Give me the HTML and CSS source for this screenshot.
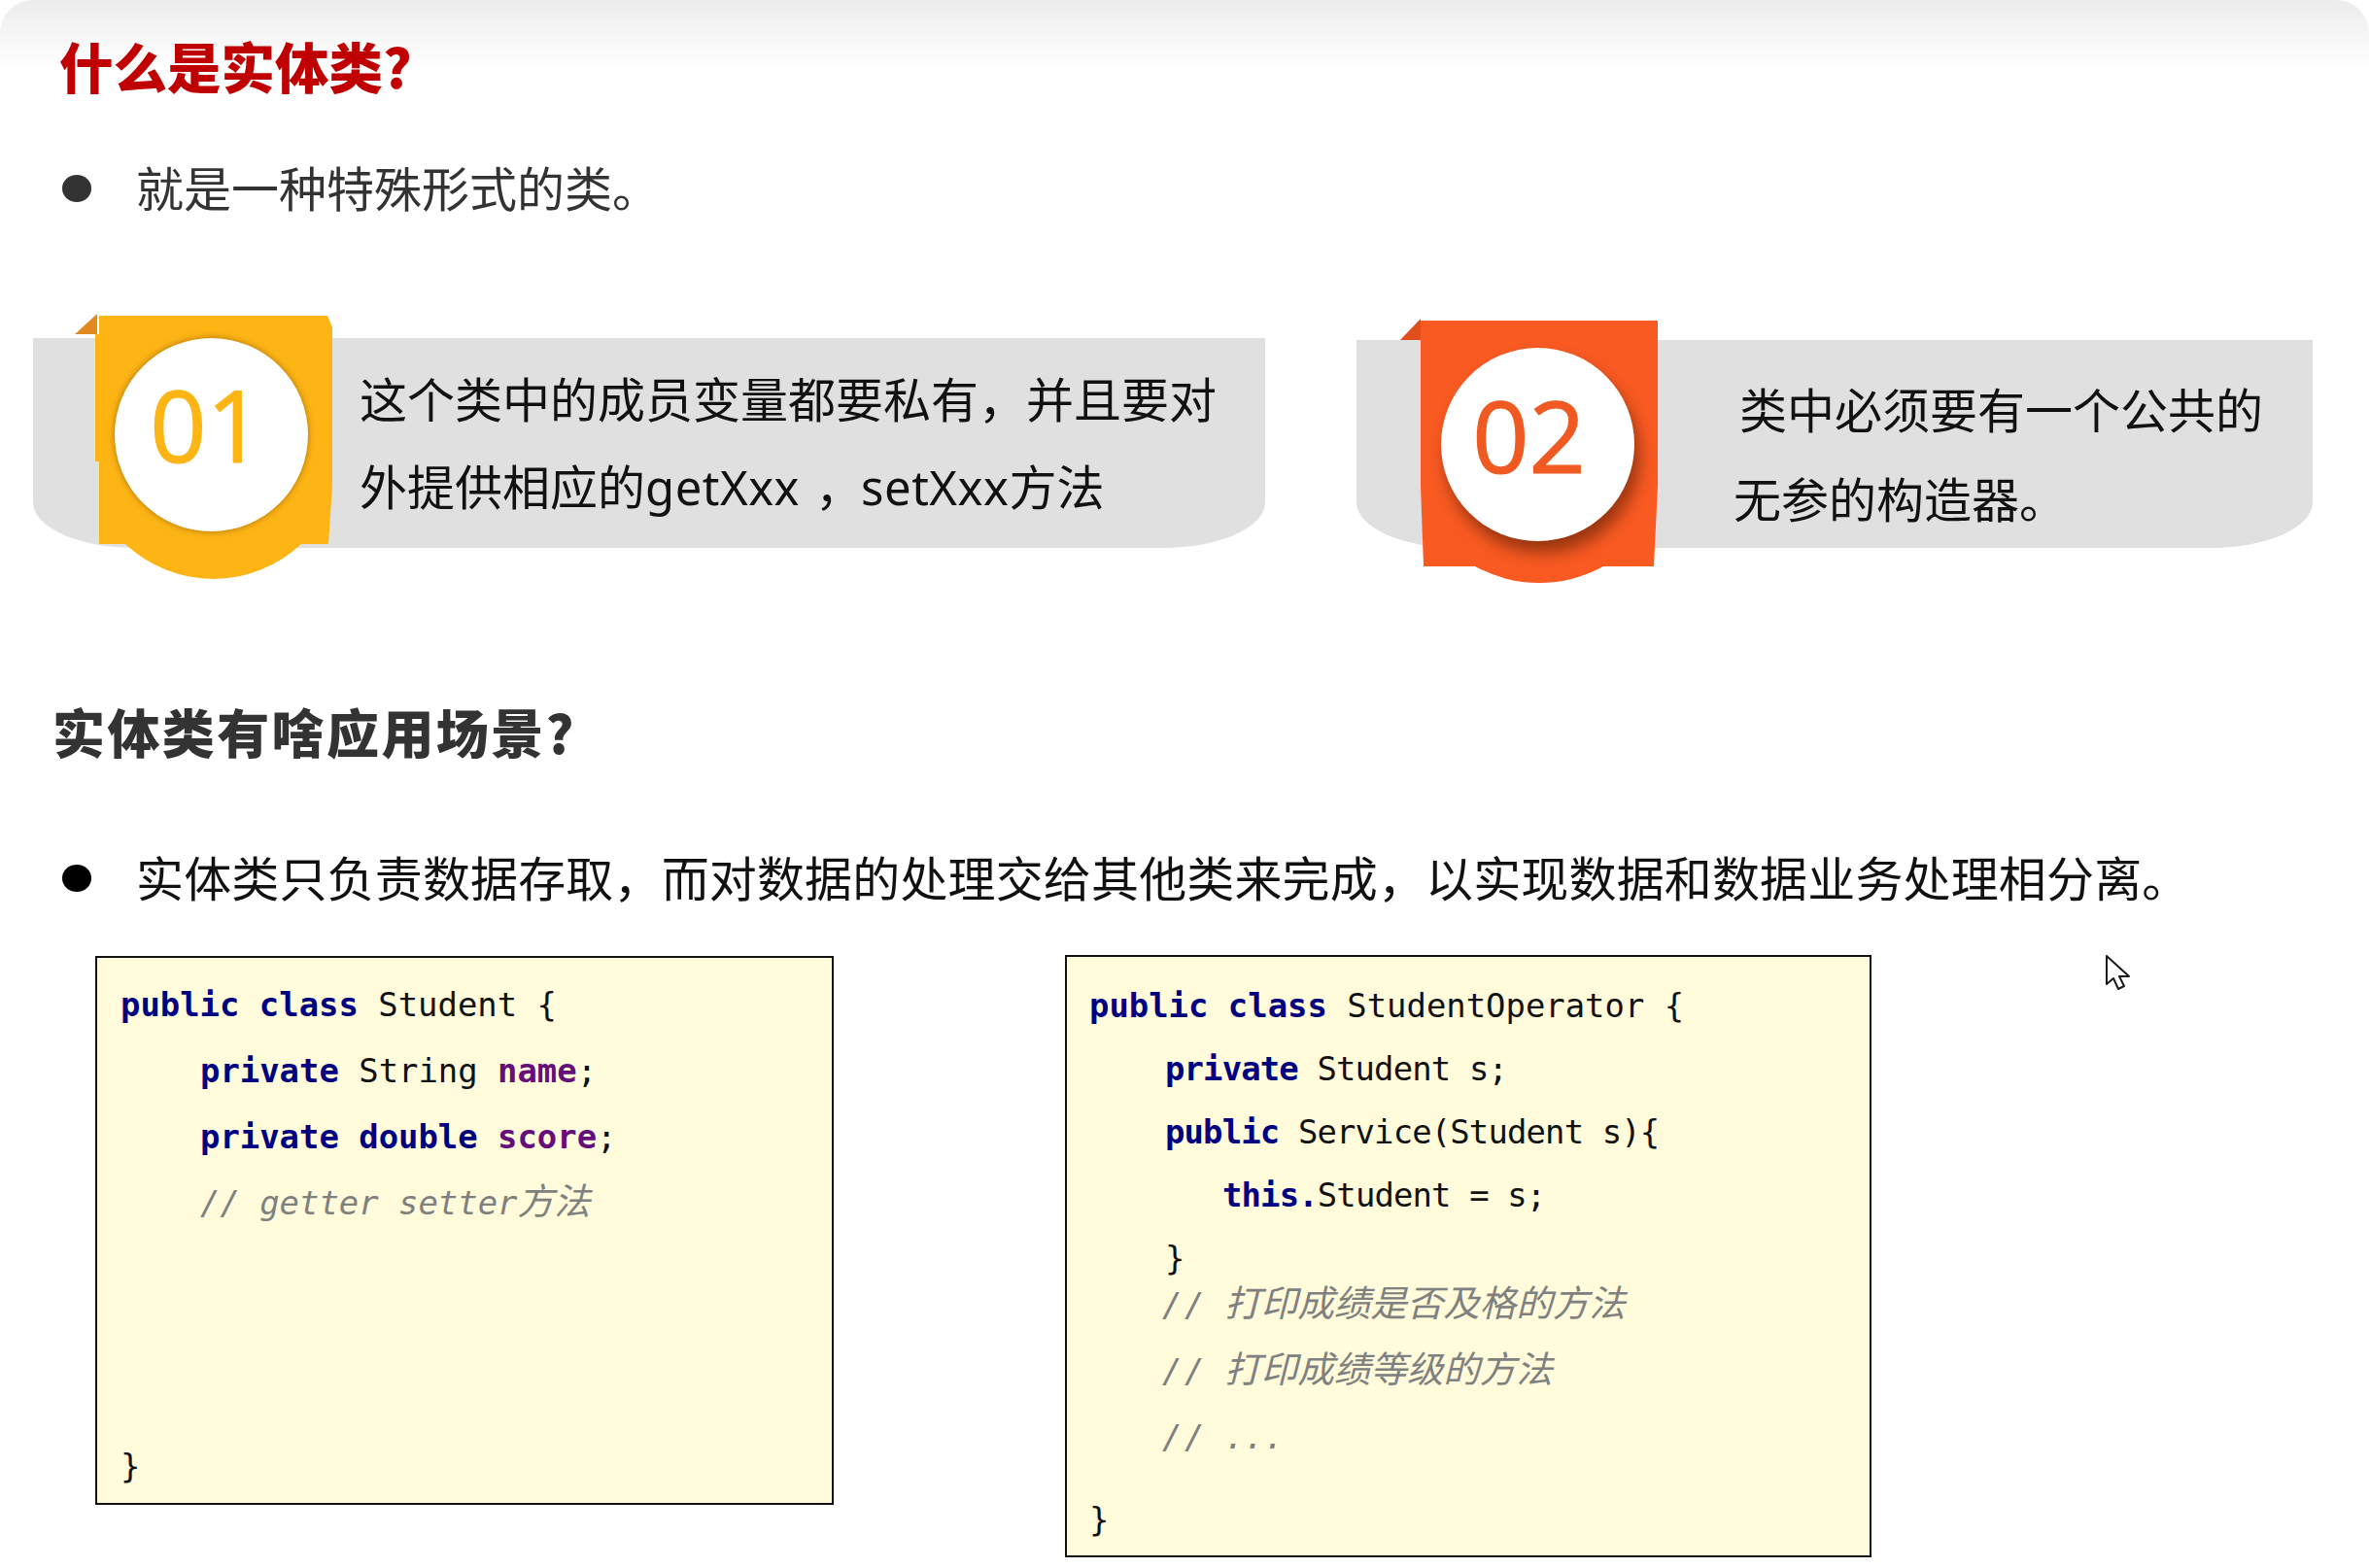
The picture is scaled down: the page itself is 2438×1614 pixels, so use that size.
FILE: index.html
```html
<!DOCTYPE html>
<html lang="zh-CN">
<head>
<meta charset="utf-8">
<title>实体类</title>
<link rel="stylesheet" href="styles.css">
</head>
<body>
<main class="slide">
  <h1 class="title">什么是实体类?</h1>
  <div class="bullet bullet-first"><span class="dot dot-soft"></span><span class="bullet-text">就是一种特殊形式的类。</span></div>

  <section class="banners">
    <div class="banner banner-one">
      <div class="badge badge-one">
        <svg class="badge-shape" viewBox="70 320 280 280" width="280" height="280" aria-hidden="true">
          <path fill="#e08a20" d="M77 344 L100 323 V344 Z"/>
          <path fill="#fdb515" d="M102 325 H337 L342 337 V500 L338 560 H310 A132 132 0 0 1 129 560 H102 V475 H98 V344 H102 Z"/>
        </svg>
        <div class="disc disc-one">01</div>
      </div>
      <div class="banner-line">这个类中的成员变量都要私有，并且要对</div>
      <div class="banner-line">外提供相应的<span class="lat">getXxx</span> <span class="comma">，</span> <span class="lat">setXxx</span>方法</div>
    </div>
    <div class="banner banner-two">
      <div class="badge badge-two">
        <svg class="badge-shape" viewBox="1435 325 280 280" width="280" height="280" aria-hidden="true">
          <path fill="#e04e1c" d="M1441 350 L1462 328 V350 Z"/>
          <path fill="#f95a22" d="M1462 330 H1706 V500 L1702 583 H1650 A137 137 0 0 1 1518 583 H1465 L1462 500 Z"/>
        </svg>
        <div class="disc disc-two">02</div>
      </div>
      <div class="banner-line">类中必须要有一个公共的</div>
      <div class="banner-line banner-line-out">无参的构造器。</div>
    </div>
  </section>

  <h2 class="subtitle">实体类有啥应用场景?</h2>
  <div class="bullet bullet-second"><span class="dot"></span><span class="bullet-text bullet-text-long">实体类只负责数据存取，而对数据的处理交给其他类来完成，以实现数据和数据业务处理相分离。</span></div>

  <section class="codes">
    <div class="code code-one">
      <div class="ln"><b class="kw">public class</b> Student {</div>
      <div class="ln i1"><b class="kw">private</b> String <b class="fld">name</b>;</div>
      <div class="ln i1"><b class="kw">private double</b> <b class="fld">score</b>;</div>
      <div class="ln i1 cm">// getter setter<span class="zh">方法</span></div>
      <div class="ln end">}</div>
    </div>
    <div class="code code-two">
      <div class="ln"><b class="kw">public class</b> StudentOperator {</div>
      <div class="ln i1 tight"><b class="kw">private</b> Student s;</div>
      <div class="ln i1 tight"><b class="kw">public</b> Service(Student s){</div>
      <div class="ln i2 tight"><b class="kw">this.</b>Student = s;</div>
      <div class="ln i1 close">}</div>
      <div class="ln i1 cm wide"><span class="sl">//</span> <span class="zh">打印成绩是否及格的方法</span></div>
      <div class="ln i1 cm wide"><span class="sl">//</span> <span class="zh">打印成绩等级的方法</span></div>
      <div class="ln i1 cm wide"><span class="sl">//</span> ...</div>
      <div class="ln end">}</div>
    </div>
  </section>

  <svg class="cursor" viewBox="0 0 26 38" width="26" height="38" aria-hidden="true">
    <path fill="#fff" stroke="#1a1a1a" stroke-width="2" stroke-linejoin="round" d="M1 1 V30 L8 24 L13 35 L19 32 L14 22 H24 Z"/>
  </svg>
</main>
</body>
</html>
```

FILE: styles.css
```css
* { box-sizing: border-box; }
html, body { margin: 0; padding: 0; background: #fff; }
body {
  width: 2438px;
  height: 1614px;
  overflow: hidden;
  font-family: "Noto Sans CJK SC", "Noto Sans", sans-serif;
}
.slide {
  position: relative;
  display: flex;
  flex-direction: column;
  width: 2438px;
  height: 1614px;
  padding-top: 27px;
  border-radius: 34px 34px 0 0;
  background: linear-gradient(#ececec 0, #f6f6f6 36px, #fff 72px) no-repeat;
}
.title {
  margin: 0 0 0 61px;
  height: 80px;
  font-size: 55.5px;
  line-height: 80px;
  font-weight: 900;
  color: #c00000;
}
.bullet {
  display: flex;
  align-items: center;
  height: 80px;
  padding-left: 64px;
  font-size: 49px;
  line-height: 80px;
  color: #111;
  white-space: nowrap;
}
.bullet-first { margin-top: 47px; color: #333; }
.bullet-second { margin-top: 71px; }
.bullet-text { margin-bottom: 5px; }
.bullet-text-long { letter-spacing: 0.15px; }
.dot {
  flex: none;
  width: 30px;
  height: 28px;
  margin-right: 46px;
  border-radius: 50%;
  background: #000;
}
.dot-soft { background: #333; }
.banners {
  display: flex;
  align-items: flex-start;
  gap: 94px;
  margin-top: 114px;
  padding-left: 34px;
}
.banner {
  position: relative;
  font-size: 49px;
  color: #111;
  white-space: nowrap;
  background: #e0e0e1;
  border-radius: 0 0 105px 105px / 0 0 47px 47px;
}
.lat { font-family: "Noto Sans", sans-serif; letter-spacing: 0.5px; }
.comma { margin: 0 -13px 0 5px; }
.banner-one {
  width: 1268px;
  height: 216px;
  padding: 16px 0 0 336px;
}
.banner-one .banner-line { height: 90px; line-height: 90px; }
.banner-two {
  width: 984px;
  height: 214px;
  margin-top: 2px;
  padding: 24px 0 0 394px;
}
.banner-two .banner-line { line-height: 92px; }
.banner-line-out { margin-left: -6px; }
.badge {
  position: absolute;
  width: 280px;
  height: 280px;
}
.badge-one { left: 36px; top: -28px; }
.badge-two { left: 39px; top: -25px; }
.badge-shape { display: block; }
.disc {
  position: absolute;
  left: 48px;
  display: flex;
  align-items: center;
  justify-content: center;
  width: 199px;
  height: 199px;
  border-radius: 50%;
  background: #fff;
  font-family: "Open Sans", sans-serif;
  font-size: 102px;
  font-weight: 400;
  line-height: 1;
  -webkit-text-stroke: 1.2px currentColor;
}
.disc-one {
  top: 28px;
  padding: 0 10px 22px 0;
  color: #fdb515;
  box-shadow: 0 0 7px rgba(130, 75, 0, 0.65);
}
.disc-two {
  top: 33px;
  padding: 0 18px 20px 0;
  color: #f05a22;
  box-shadow: 5px 12px 16px rgba(90, 30, 5, 0.6);
}
.subtitle {
  margin: 149px 0 0 54px;
  height: 80px;
  font-size: 54px;
  line-height: 80px;
  font-weight: 900;
  letter-spacing: 2.4px;
  color: #333;
}
.codes {
  display: flex;
  align-items: flex-start;
  gap: 238px;
  margin-top: 39px;
  padding-left: 98px;
}
.code {
  display: flex;
  flex-direction: column;
  border: 2px solid #111;
  background: #fffbdb;
  font-family: "DejaVu Sans Mono", "Noto Sans CJK SC", monospace;
  font-size: 33.9px;
  color: #111;
  white-space: pre;
}
.code-one {
  width: 760px;
  height: 565px;
  margin-top: 1px;
  padding: 15px 0 3px 24px;
}
.code-one .ln { line-height: 68px; }
.code-one .i1 { padding-left: 82px; }
.code-two {
  width: 830px;
  height: 620px;
  padding: 18px 0 2px 23px;
}
.code-two .ln { line-height: 65px; }
.code-two .i1 { padding-left: 78px; }
.code-two .i2 { padding-left: 137px; }
.code-two .close { height: 47px; }
.code-two .wide { line-height: 68px; padding-left: 75px; }
.code-two .end { line-height: 68px; }
.tight { letter-spacing: -0.85px; }
.sl { letter-spacing: 2.5px; margin-right: -2px; }
.kw { color: #000080; font-weight: 700; }
.fld { color: #660e7a; font-weight: 700; }
.cm { color: #808080; font-style: italic; }
.zh {
  font-family: "Noto Sans CJK SC", sans-serif;
  font-size: 37.5px;
  line-height: 1;
}
.end { margin-top: auto; }
.cursor {
  position: absolute;
  left: 2167px;
  top: 983px;
}
```
